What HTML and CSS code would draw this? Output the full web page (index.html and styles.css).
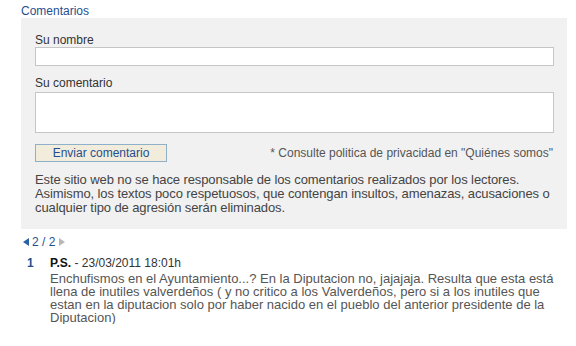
FILE: index.html
```html
<!DOCTYPE html>
<html lang="es">
<head>
<meta charset="utf-8">
<title>Comentarios</title>
<link rel="stylesheet" href="styles.css">
</head>
<body>
<div class="wrap">
  <h3 class="title">Comentarios</h3>
  <form class="box">
    <label class="lbl">Su nombre</label>
    <input class="field" type="text">
    <label class="lbl lbl2">Su comentario</label>
    <textarea class="area"></textarea>
    <div class="actions">
      <button class="btn" type="button">Enviar comentario</button>
      <span class="note">* Consulte politica de privacidad en "Quiénes somos"</span>
    </div>
    <p class="disc">Este sitio web no se hace responsable de los comentarios realizados por los lectores.<br>Asimismo, los textos poco respetuosos, que contengan insultos, amenazas, acusaciones o cualquier tipo de agresión serán eliminados.</p>
  </form>
  <div class="pager">
    <span class="tri tri-l"></span><span class="pg">2 / 2</span><span class="tri tri-r"></span>
  </div>
  <div class="comment">
    <div class="num">1</div>
    <div class="cbody">
      <div class="head"><b>P.S.</b> - 23/03/2011 18:01h</div>
      <div class="text">Enchufismos en el Ayuntamiento...? En la Diputacion no, jajajaja. Resulta que esta está llena de inutiles valverdeños ( y no critico a los Valverdeños, pero si a los inutiles que estan en la diputacion solo por haber nacido en el pueblo del anterior presidente de la Diputacion)</div>
    </div>
  </div>
</div>
</body>
</html>
```

FILE: styles.css
```css
html, body {
  margin: 0;
  padding: 0;
  background: #fff;
}
body {
  font-family: "Liberation Sans", Arial, sans-serif;
  font-size: 12px;
  color: #444;
}
.wrap {
  padding: 4px 9px 0 21px;
}
.title {
  margin: 0;
  font-size: 12px;
  font-weight: normal;
  color: #1f4f8f;
  line-height: 14px;
}
.box {
  background: #f1f1f1;
  padding: 15px 13px 14px 14px;
  display: flex;
  flex-direction: column;
}
.lbl {
  color: #333;
  line-height: 14px;
}
.field {
  margin: 0;
  height: 19px;
  box-sizing: border-box;
  border: 1px solid #c6c6c6;
  background: #fff;
  padding: 0;
}
.lbl2 {
  margin-top: 10px;
}
.area {
  margin: 2px 0 0;
  height: 41px;
  box-sizing: border-box;
  border: 1px solid #c6c6c6;
  background: #fff;
  resize: none;
  padding: 0;
  display: block;
}
.actions {
  display: flex;
  justify-content: space-between;
  align-items: center;
  margin-top: 11px;
}
.btn {
  width: 132px;
  height: 18px;
  box-sizing: border-box;
  border: 1px solid #8fb0c9;
  background: #f2ecdc;
  color: #1f4f8f;
  font-family: "Liberation Sans", Arial, sans-serif;
  font-size: 12px;
  padding: 0;
  line-height: 16px;
}
.note {
  color: #555;
  padding-right: 1px;
}
.disc {
  margin: 11px 0 0;
  font-size: 13px;
  letter-spacing: -0.1px;
  line-height: 14px;
  color: #444;
}
.pager {
  display: flex;
  align-items: center;
  margin-top: 6px;
  padding-left: 2px;
  line-height: 14px;
}
.pg {
  color: #1f4f8f;
  margin: 0 4px 0 3px;
}
.tri {
  width: 0;
  height: 0;
  border-top: 4px solid transparent;
  border-bottom: 4px solid transparent;
}
.tri-l {
  border-right: 6px solid #2a62a8;
}
.tri-r {
  border-left: 6px solid #b8b8b8;
}
.comment {
  display: flex;
  margin-top: 7px;
}
.num {
  width: 29px;
  padding-left: 6px;
  box-sizing: border-box;
  color: #1f4f8f;
  font-weight: bold;
  line-height: 14px;
}
.cbody {
  flex: 1;
}
.head {
  color: #333;
  line-height: 14px;
}
.head b {
  color: #111;
}
.text {
  margin-top: 2px;
  font-size: 13px;
  line-height: 13px;
  color: #555;
}
```
